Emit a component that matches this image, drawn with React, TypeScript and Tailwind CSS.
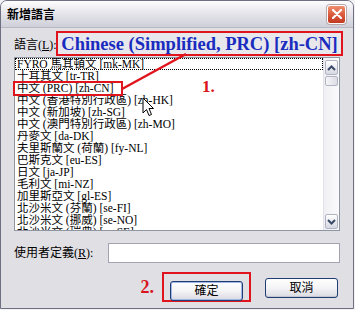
import React from 'react';

const items = [
  'FYRO 馬其頓文 [mk-MK]',
  '十耳其文 [tr-TR]',
  '中文 (PRC) [zh-CN]',
  '中文 (香港特別行政區) [zh-HK]',
  '中文 (新加坡) [zh-SG]',
  '中文 (澳門特別行政區) [zh-MO]',
  '丹麥文 [da-DK]',
  '夫里斯蘭文 (荷蘭) [fy-NL]',
  '巴斯克文 [eu-ES]',
  '日文 [ja-JP]',
  '毛利文 [mi-NZ]',
  '加里斯亞文 [gl-ES]',
  '北沙米文 (芬蘭) [se-FI]',
  '北沙米文 (挪威) [se-NO]',
  '北沙米文 (瑞典) [se-SE]',
];

const font = { fontFamily: '"Liberation Serif", "Noto Sans CJK TC", serif' };

const Chevron: React.FC<{ up?: boolean }> = ({ up }) => (
  <svg width="9" height="6" viewBox="0 0 9 6">
    <path d={up ? 'M1 5 L4.5 1.5 L8 5' : 'M1 1 L4.5 4.5 L8 1'} fill="none" stroke="#3b4a68" strokeWidth="2" />
  </svg>
);

const XpButton: React.FC<{ label: string; isDefault?: boolean }> = ({ label, isDefault }) => (
  <button
    className={`w-[73px] h-[20px] rounded-[3px] border border-[#1f3d72] bg-gradient-to-b from-white via-[#f4f4f6] to-[#d9d9e2] text-[12px] leading-[18px] text-black ${
      isDefault ? 'shadow-[inset_0_0_0_1px_#9fb6e6]' : 'shadow-[inset_0_-1px_0_#c4c4d0]'
    }`}
  >
    {label}
  </button>
);

export default function App() {
  return (
    <div className="w-[355px] h-[310px] bg-[#f2f2f4] text-black" style={font}>
      <div className="relative w-[354px] h-[309px] flex flex-col rounded-t-[7px] border border-[#6f6f82] bg-[#e0dfe3] overflow-hidden">
        {/* title bar */}
        <div className="h-[27px] flex items-center justify-between pl-[6px] pr-[7px] bg-gradient-to-b from-[#fdfdfe] via-[#e4e4ea] to-[#cfcfd9] border-b border-[#b9b9c6]">
          <span
            className="text-[12px] font-bold text-black"
            style={{ fontFamily: '"Noto Sans CJK TC", sans-serif' }}
          >
            新增語言
          </span>
          <div className="w-[19px] h-[19px] rounded-[3px] border border-white bg-gradient-to-b from-[#ee8f70] via-[#db5a3c] to-[#c03a22] flex items-center justify-center shadow-[0_0_0_1px_#b8a8a8]">
            <svg width="10" height="10" viewBox="0 0 10 10">
              <path d="M1 1 L9 9 M9 1 L1 9" stroke="white" strokeWidth="2.2" strokeLinecap="round" />
            </svg>
          </div>
        </div>

        {/* body */}
        <div className="flex-1 flex flex-col px-[13px] pt-[10px]">
          <div className="h-[14px] text-[12px] leading-[14px]">
            語言(<span className="underline">L</span>):
          </div>

          {/* list box */}
          <div className="mt-[5px] h-[174px] flex border border-[#8e96a4] bg-white">
            <div className="flex-1 overflow-hidden">
              {items.map((item, i) => (
                <div
                  key={item}
                  className={`h-[12px] pl-[2px] text-[11.5px] leading-[12px] whitespace-nowrap ${
                    i === 0 ? 'outline-1 outline-dotted outline-black -outline-offset-1' : ''
                  }`}
                >
                  {item}
                </div>
              ))}
            </div>
            <div className="w-[16px] flex flex-col px-[1px] pt-[2px] pb-[1px] bg-gradient-to-r from-[#f0f0f4] to-[#fbfbfd] border-l border-[#e2e2e8]">
              <div className="h-[15px] rounded-[2px] border border-[#b0b4c2] bg-gradient-to-b from-white to-[#d6d8e2] flex items-center justify-center">
                <Chevron up />
              </div>
              <div className="mt-[1px] h-[10px] rounded-[2px] border border-[#b0b4c2] bg-gradient-to-r from-[#f6f6f9] to-[#dcdde5]" />
              <div className="flex-1" />
              <div className="h-[15px] rounded-[2px] border border-[#b0b4c2] bg-gradient-to-b from-white to-[#d6d8e2] flex items-center justify-center">
                <Chevron />
              </div>
            </div>
          </div>

          {/* custom language */}
          <div className="mt-[12px] h-[20px] flex items-center justify-between">
            <span className="text-[12px] leading-[14px]">
              使用者定義(<span className="underline">R</span>):
            </span>
            <div className="w-[232px] h-[20px] border border-[#a3a3b2] bg-white" />
          </div>

          {/* buttons */}
          <div className="mt-[9px] flex items-center justify-end pr-[2px]">
            <span className="mr-[8px] text-[18px] font-bold leading-[18px] text-[#d8141c]">2.</span>
            <div className="h-[30px] px-[6px] pt-[4px] border-2 border-[#e0141c]">
              <XpButton label="確定" isDefault />
            </div>
            <div className="ml-[14px]">
              <XpButton label="取消" />
            </div>
          </div>
        </div>

        {/* annotations */}
        <div className="absolute left-[55px] top-[30px] w-[287px] h-[25px] border-2 border-[#e0141c] bg-[#e8e8ec] flex items-center justify-center">
          <span className="text-[18.5px] font-bold leading-[20px] text-[#1a2cc0] whitespace-nowrap">
            Chinese (Simplified, PRC) [zh-CN]
          </span>
        </div>
        <div className="absolute left-[12px] top-[80px] w-[110px] h-[15px] border-2 border-[#e0141c]" />
        <svg className="absolute left-0 top-0 pointer-events-none" width="354" height="309">
          <line x1="121" y1="88" x2="185" y2="53" stroke="#e0141c" strokeWidth="2.5" />
        </svg>
        <span className="absolute left-[201px] top-[77px] text-[17px] font-bold leading-[18px] text-[#d8141c]">1.</span>
        <svg className="absolute left-[141px] top-[96px]" width="13" height="21" viewBox="0 0 13 21">
          <path d="M1 1 L1 16 L4.5 12.5 L7 18.5 L9.5 17.5 L7 11.5 L11.5 11.5 Z" fill="white" stroke="black" strokeWidth="1" strokeLinejoin="miter" />
        </svg>
      </div>
    </div>
  );
}
